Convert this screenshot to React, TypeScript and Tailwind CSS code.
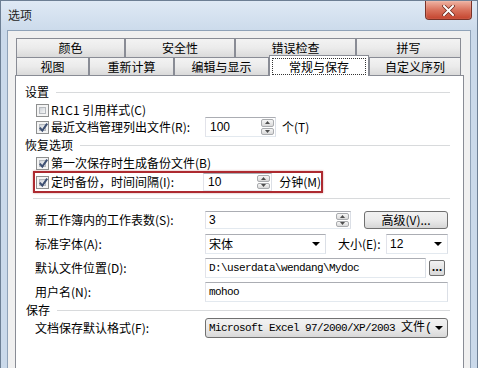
import React from "react";

const cjk = "font-['Noto_Sans_CJK_SC',sans-serif]";
const mono = "font-['Liberation_Mono','Noto_Sans_CJK_SC',monospace] text-[11px] tracking-[-0.6px]";
const num = "font-['Liberation_Sans',sans-serif] text-[12px]";

function Check({ checked }: { checked?: boolean }) {
  return (
    <span className="relative flex h-[13px] w-[13px] shrink-0 border border-[#8e8f8f] bg-[#f4f4f4] p-[2px]">
      <span className="flex-1 border border-[#b5b9be] bg-gradient-to-br from-[#cfd3d8] to-[#f7f7f7]" />
      {checked && (
        <svg className="absolute left-[1px] top-[0px]" width="11" height="11" viewBox="0 0 11 11">
          <path d="M1.8 5.6 L4.3 8.6 L9.2 1.6" stroke="#3d4f72" strokeWidth="2" fill="none" />
        </svg>
      )}
    </span>
  );
}

function Spin() {
  return (
    <span className="flex w-[14px] shrink-0 flex-col gap-px self-stretch py-px pr-px">
      <span className="flex flex-1 items-center justify-center rounded-[2px] border border-[#a9abae] bg-gradient-to-b from-[#f6f6f6] to-[#dadada]">
        <svg width="5" height="3" viewBox="0 0 5 3">
          <path d="M0 3 L2.5 0 L5 3Z" fill="#4e4e4e" />
        </svg>
      </span>
      <span className="flex flex-1 items-center justify-center rounded-[2px] border border-[#a9abae] bg-gradient-to-b from-[#f6f6f6] to-[#dadada]">
        <svg width="5" height="3" viewBox="0 0 5 3">
          <path d="M0 0 L2.5 3 L5 0Z" fill="#4e4e4e" />
        </svg>
      </span>
    </span>
  );
}

function Arrow() {
  return (
    <svg width="8" height="4" viewBox="0 0 8 4" className="shrink-0">
      <path d="M0 0 L8 0 L4 4Z" fill="#000" />
    </svg>
  );
}

function Group({ title, className = "" }: { title: string; className?: string }) {
  return (
    <div className={`flex h-[14px] items-center gap-[7px] pr-[13px] ${className}`}>
      <span className="text-[12px] leading-none">{title}</span>
      <span className="h-px flex-1 bg-[#d8dadc]" />
    </div>
  );
}

const inputBox = "flex items-center border border-[#abadb3] border-b-[#e3e9ef] border-l-[#e2e3ea] border-r-[#dbdfe6] bg-white";

function Tab({ label, w, selected }: { label: string; w: string; selected?: boolean }) {
  if (selected) {
    return (
      <div className={`relative z-10 -mb-px -mt-[2px] flex h-[21px] items-center justify-center border border-b-0 border-[#898c95] bg-white px-[2px] pt-[1px] ${w}`}>
        <span className="flex h-[17px] w-full items-center justify-center border border-dotted border-[#333] text-[12px] leading-none">
          {label}
        </span>
      </div>
    );
  }
  return (
    <div className={`flex items-center justify-center border border-b-0 border-[#898c95] bg-gradient-to-b from-[#f3f3f3] via-[#ebebeb] to-[#dadada] text-[12px] leading-none ${w}`}>
      {label}
    </div>
  );
}

export default function App() {
  return (
    <div className={`relative flex h-[368px] w-[478px] flex-col overflow-hidden border-l border-t border-r border-[#6d7f94] bg-[#cad9ea] text-black ${cjk}`}>
      {/* title bar */}
      <div className="flex h-[29px] shrink-0 items-start justify-between bg-gradient-to-b from-[#dfe9f5] to-[#ccdbeb]">
        <span className="ml-[7px] mt-[8px] text-[12px] leading-none text-[#1e1e1e]">选项</span>
        <div className="mr-[5px] flex h-[19px] w-[47px] items-center justify-center rounded-b-[4px] border border-t-0 border-[#7a3227] bg-gradient-to-b from-[#eeb3a3] via-[#d9725d] to-[#c4432d] shadow-[inset_0_0_1px_rgba(255,255,255,0.8)]">
          <svg width="13" height="11" viewBox="0 0 13 11">
            <path d="M2 1 L11 10 M11 1 L2 10" stroke="#6a261b" strokeWidth="3.4" strokeLinecap="square" />
            <path d="M2 1 L11 10 M11 1 L2 10" stroke="#ffffff" strokeWidth="2" strokeLinecap="square" />
          </svg>
        </div>
      </div>

      {/* client area */}
      <div className="ml-[6px] mr-[6px] flex flex-1 flex-col border border-b-0 border-[#8fa2b8] bg-[#f0f0f0] pl-[7px] pt-[7px]">
        {/* tabs row 1 */}
        <div className="ml-px flex h-[19px]">
          <Tab label="颜色" w="w-[109px]" />
          <Tab label="安全性" w="w-[110px]" />
          <Tab label="错误检查" w="w-[121px]" />
          <Tab label="拼写" w="w-[105px]" />
        </div>
        {/* tabs row 2 */}
        <div className="ml-px flex h-[18px] items-end">
          <Tab label="视图" w="w-[73px] h-[18px]" />
          <Tab label="重新计算" w="w-[85px] h-[18px]" />
          <Tab label="编辑与显示" w="w-[95px] h-[18px]" />
          <Tab label="常规与保存" w="w-[100px]" selected />
          <Tab label="自定义序列" w="w-[92px] h-[18px]" />
        </div>

        {/* panel */}
        <div className="flex h-[300px] w-[449px] shrink-0 flex-col border border-[#898c95] bg-white pl-[9px] text-[12px] leading-none">
          <Group title="设置" className="mt-[9px]" />

          <div className="ml-[11px] mt-[4px] flex h-[14px] items-center gap-[2px]">
            <Check />
            <span>R1C1 引用样式(C)</span>
          </div>

          <div className="flex h-[20px] items-center">
            <div className="ml-[11px] flex w-[169px] items-center gap-[2px]">
              <Check checked />
              <span>最近文档管理列出文件(R):</span>
            </div>
            <div className={`${inputBox} h-[20px] w-[71px]`}>
              <span className={`flex-1 pl-[4px] ${num}`}>100</span>
              <Spin />
            </div>
            <span className="ml-[6px]">个(T)</span>
          </div>

          <Group title="恢复选项" className="mt-px" />

          <div className="ml-[11px] mt-[4px] flex h-[14px] items-center gap-[2px]">
            <Check checked />
            <span>第一次保存时生成备份文件(B)</span>
          </div>

          <div className="ml-[8px] mt-px flex h-[22px] w-[290px] items-center border-2 border-[#ad2a30] pl-px shadow-[0_0_2px_rgba(160,40,40,0.45)]">
            <div className="flex w-[169px] items-center gap-[2px]">
              <Check checked />
              <span>定时备份，时间间隔(I):</span>
            </div>
            <div className={`${inputBox} h-[18px] w-[70px]`}>
              <span className={`flex-1 pl-[4px] ${num}`}>10</span>
              <Spin />
            </div>
            <span className="ml-[7px] whitespace-nowrap">分钟(M)</span>
          </div>

          <div className="ml-[8px] mr-[13px] mt-[5px] h-px bg-[#d8dadc]" />

          <div className="mt-[11px] flex h-[20px] items-center">
            <span className="ml-[10px] w-[170px]">新工作簿内的工作表数(S):</span>
            <div className={`${inputBox} h-[18px] w-[146px]`}>
              <span className={`flex-1 pl-[3px] ${num}`}>3</span>
              <Spin />
            </div>
            <div className="ml-[13px] flex h-[18px] w-[84px] items-center justify-center rounded-[3px] border border-[#707070] bg-gradient-to-b from-[#f2f2f2] via-[#ebebeb] to-[#d6d6d6]">
              高级(V)...
            </div>
          </div>

          <div className="mt-[4px] flex h-[20px] items-center">
            <span className="ml-[10px] w-[170px]">标准字体(A):</span>
            <div className={`${inputBox} h-[20px] w-[121px] pl-[3px] pr-[5px]`}>
              <span className="flex-1">宋体</span>
              <Arrow />
            </div>
            <span className="ml-[12px] w-[48px]">大小(E):</span>
            <div className={`${inputBox} h-[20px] w-[62px] pl-[3px] pr-[5px]`}>
              <span className={`flex-1 ${num}`}>12</span>
              <Arrow />
            </div>
          </div>

          <div className="mt-[4px] flex h-[20px] items-center">
            <span className="ml-[10px] w-[170px]">默认文件位置(D):</span>
            <div className={`${inputBox} h-[20px] w-[221px] pl-[3px]`}>
              <span className={mono}>D:\userdata\wendang\Mydoc</span>
            </div>
            <div className="ml-[3px] flex h-[16px] w-[16px] items-center justify-center rounded-[2px] border border-[#707070] bg-gradient-to-b from-[#f2f2f2] to-[#d8d8d8] pb-[3px] text-[11px] font-bold leading-none">
              ...
            </div>
          </div>

          <div className="mt-[4px] flex h-[20px] items-center">
            <span className="ml-[10px] w-[170px]">用户名(N):</span>
            <div className={`${inputBox} h-[20px] w-[243px] pl-[3px]`}>
              <span className={mono}>mohoo</span>
            </div>
          </div>

          <Group title="保存" className="ml-px mt-px" />

          <div className="mt-px flex h-[20px] items-center">
            <span className="ml-[10px] w-[170px]">文档保存默认格式(F):</span>
            <div className="flex h-[20px] w-[243px] items-center rounded-[3px] border border-[#707070] bg-gradient-to-b from-[#f2f2f2] via-[#ebebeb] to-[#d8d8d8] pl-[3px] pr-[4px]">
              <span className={`flex-1 whitespace-nowrap ${mono}`}>
                Microsoft Excel 97/2000/XP/2003 <span className="text-[12px] tracking-normal">文件(</span>
              </span>
              <Arrow />
            </div>
          </div>
        </div>
      </div>
    </div>
  );
}
